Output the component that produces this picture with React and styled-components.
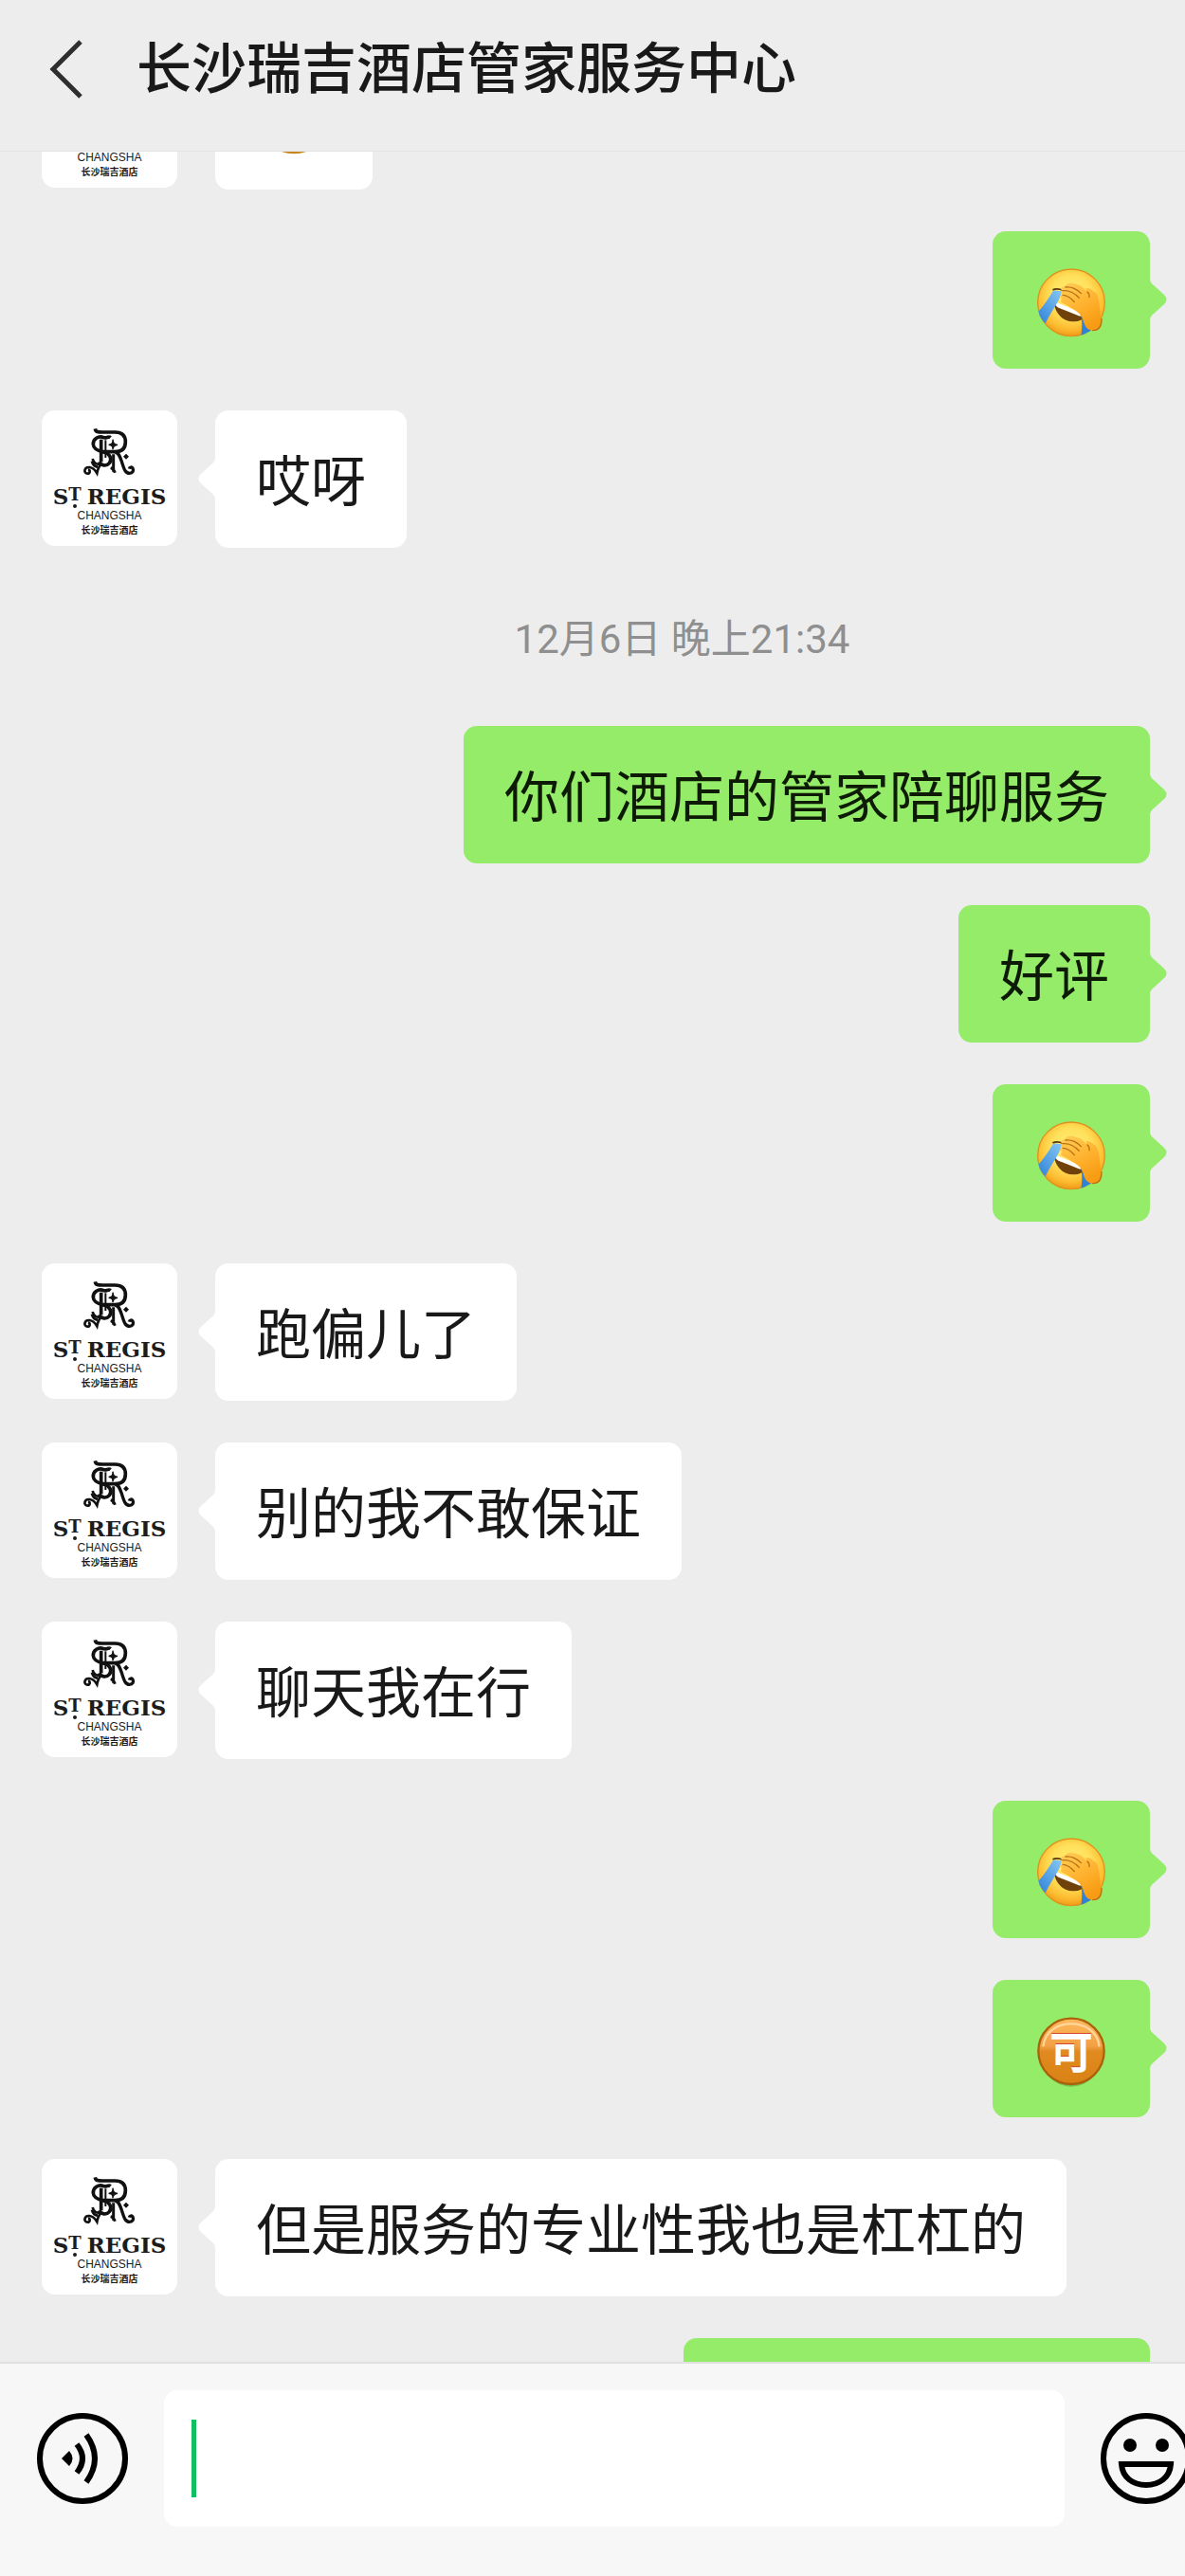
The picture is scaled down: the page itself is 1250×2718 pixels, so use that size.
import React, { useLayoutEffect, useRef } from "react";
import styled, { createGlobalStyle } from "styled-components";

const GlobalStyle = createGlobalStyle`
  * { box-sizing: border-box; }
  body {
    margin: 0;
    background: #ededed;
    color: #191919;
    font-family: Roboto, "Noto Sans CJK SC", sans-serif;
  }
`;

const Screen = styled.div`
  display: flex;
  flex-direction: column;
  height: 100vh;
  overflow: hidden;
`;

const Header = styled.header`
  display: flex;
  align-items: center;
  gap: 44px;
  flex: none;
  padding: 29px 44px 43px;
  border-bottom: 1px solid #e4e4e4;
`;

const Title = styled.h1`
  margin: 0;
  padding-top: 2px;
  font-size: 58px;
  line-height: 85px;
  font-weight: 500;
`;

const IconButton = styled.button`
  display: flex;
  flex: none;
  padding: 0;
  border: 0;
  background: none;
  color: ${(p) => p.$color || "#000"};
`;

const Messages = styled.main`
  display: flex;
  flex-direction: column;
  flex: 1;
  gap: 44px;
  min-height: 0;
  padding: 0 37px 0 44px;
  overflow-y: auto;
  scrollbar-width: none;
`;

const Row = styled.div`
  display: flex;
  flex: none;
  gap: 40px;
  justify-content: ${(p) => (p.$mine ? "flex-end" : "flex-start")};
`;

const Bubble = styled.div`
  position: relative;
  display: flex;
  align-items: center;
  min-width: ${(p) => p.$minWidth || 0}px;
  min-height: 145px;
  padding: 0 43px;
  border-radius: 14px;
  background: ${(p) => (p.$mine ? "#95ec69" : "#fff")};
  color: ${(p) => (p.$mine ? "#0d1a06" : "#191919")};
  font-size: 58px;
  line-height: 86px;
`;

const BubbleText = styled.p`
  margin: 0;
  padding-top: 6px;
`;

const Tail = styled.svg`
  position: absolute;
  top: 50px;
  ${(p) => (p.$mine ? "left: 100%;" : "right: 100%; transform: scaleX(-1);")}
  fill: ${(p) => (p.$mine ? "#95ec69" : "#fff")};
`;

const Stamp = styled.time`
  flex: none;
  padding: 24px 0 18px 182px;
  color: #8f8f8f;
  font-size: 42px;
  line-height: 58px;
  text-align: center;
`;

const AvatarCard = styled.div`
  display: flex;
  flex-direction: column;
  align-items: center;
  flex: none;
  width: 143px;
  height: 143px;
  padding-top: 14px;
  border-radius: 14px;
  background: #fff;
  color: #1c1c1c;
  white-space: nowrap;
`;

const Brand = styled.span`
  display: flex;
  gap: 6px;
  padding-top: 5px;
  font-family: "DejaVu Serif", serif;
  font-size: 23px;
  line-height: 24px;
  font-weight: 700;
`;

const Saint = styled.span`
  display: flex;
`;

const RaisedT = styled.span`
  position: relative;
  font-size: 18px;
  line-height: 20px;
  &::after {
    content: "";
    position: absolute;
    left: 5px;
    bottom: 0;
    width: 4px;
    height: 4px;
    border-radius: 50%;
    background: currentColor;
  }
`;

const City = styled.span`
  font-family: "Liberation Sans", sans-serif;
  font-size: 12px;
  line-height: 16px;
`;

const HotelName = styled.span`
  font-size: 10px;
  line-height: 16px;
  font-weight: 700;
`;

const Footer = styled.footer`
  flex: none;
  overflow: hidden;
  border-top: 2px solid #e0e0e0;
  background: #f7f7f7;
`;

const Composer = styled.form`
  display: flex;
  align-items: center;
  gap: 38px;
  margin-right: -7px;
  padding: 28px 0 52px 39px;
`;

const Field = styled.label`
  display: flex;
  align-items: center;
  flex: 1;
  min-width: 0;
  height: 144px;
  padding: 0 29px;
  border-radius: 14px;
  background: #fff;
`;

const Caret = styled.span`
  flex: none;
  width: 5px;
  height: 82px;
  background: #10c060;
`;

const TextInput = styled.input`
  flex: 1;
  min-width: 0;
  height: 86px;
  padding: 0;
  border: 0;
  outline: 0;
  background: none;
  font: inherit;
  font-size: 58px;
  caret-color: transparent;
`;

function Monogram() {
  return (
    <svg width="64" height="60" viewBox="0 0 192 180" fill="none" stroke="#111" strokeWidth="11" aria-hidden="true">
      <path d="M49 16C51 28 60 27 76 27H112C138 27 145 42 145 58C145 80 132 89 112 89H68" />
      <path d="M112 90C124 91 128 105 134 123C141 144 144 157 158 157C168 157 172 149 168 141C165 136 158 138 157 143" strokeWidth="10" />
      <path d="M98 44C91 38 84 48 76 44C60 37 42 48 43 66C44 82 61 87 76 90C96 94 104 112 94 125C84 137 67 132 62 121" />
      <path d="M68 50V121" />
      <path d="M82 52V108" strokeWidth="6" />
      <path d="M105 50C105 61 104 65 92 67C104 69 105 72 105 82C105 73 108 69 120 67C108 65 106 61 105 50Z" fill="#111" strokeWidth="4" />
      <path d="M107 97V152M98 140C105 142 109 147 112 155" strokeWidth="9" />
      <path d="M41 111C45 128 55 130 70 126C61 134 57 146 55 157C48 145 41 139 31 138C13 137 12 158 25 158C34 158 34 147 27 146" strokeWidth="8" />
      <path d="M39 119C43 133 48 135 57 137" strokeWidth="9" />
      <path d="M147 95L156 104L147 113L138 104Z" fill="#111" stroke="none" />
    </svg>
  );
}

function Avatar() {
  return (
    <AvatarCard>
      <Monogram />
      <Brand>
        <Saint>
          S<RaisedT>T</RaisedT>
        </Saint>
        <span>REGIS</span>
      </Brand>
      <City>CHANGSHA</City>
      <HotelName>长沙瑞吉酒店</HotelName>
    </AvatarCard>
  );
}

function FacepalmEmoji() {
  return (
    <svg width="80" height="80" viewBox="0 -9 240 240" role="img" aria-label="笑哭捂脸">
      <defs>
        <radialGradient id="skin" cx="0.5" cy="0.4" r="0.62">
          <stop offset="0" stopColor="#fff07e" />
          <stop offset="0.5" stopColor="#ffe05a" />
          <stop offset="0.8" stopColor="#fdbb30" />
          <stop offset="1" stopColor="#ee9416" />
        </radialGradient>
        <linearGradient id="hand" x1="0" y1="0" x2="0.5" y2="1">
          <stop offset="0" stopColor="#ffcf58" />
          <stop offset="0.5" stopColor="#ffb634" />
          <stop offset="1" stopColor="#f89c14" />
        </linearGradient>
        <linearGradient id="tear" x1="1" y1="0" x2="0" y2="1">
          <stop offset="0" stopColor="#86c8f4" />
          <stop offset="1" stopColor="#2b7fd6" />
        </linearGradient>
        <clipPath id="face">
          <circle cx="120" cy="118" r="108" />
        </clipPath>
      </defs>
      <circle cx="120" cy="118" r="106" fill="url(#skin)" stroke="#e0921c" strokeWidth="4" />
      <g clipPath="url(#face)">
        <path d="M66 122C70 151 92 177 126 178C143 179 155 173 161 165Z" fill="#70420a" />
        <path d="M66 117C70 127 74 132 84 136L148 161L157 151L70 116Z" fill="#fff" />
        <path d="M64 79L90 82C86 111 60 139 38 184L10 152C30 133 49 104 64 79Z" fill="url(#tear)" />
        <path d="M151 160C155 178 155 199 150 230L185 218L176 174Z" fill="#2f82d4" />
        <path d="M61 77C72 73 83 74 94 79" stroke="#59380a" strokeWidth="5" fill="none" />
      </g>
      <path d="M94 80C82 79 90 65 99 67C105 53 119 53 133 59C148 61 157 69 171 84L166 74C174 67 187 77 199 89C213 110 208 144 216 169C221 197 208 211 185 206C169 203 163 193 158 175C153 156 142 150 131 142C120 135 106 125 92 119C85 115 86 107 93 107C82 101 84 92 94 94C86 88 87 81 94 80Z" fill="url(#hand)" />
      <path d="M102 69C120 66 140 76 151 89M94 80C113 78 133 89 145 103M93 94C105 94 119 103 130 116M171 84C177 89 178 94 177 101M216 169C216 195 205 206 188 206" fill="none" stroke="#b87018" strokeWidth="4" strokeLinecap="round" />
    </svg>
  );
}

const SealText = styled.text`
  font-family: "Noto Sans CJK SC", sans-serif;
  font-size: 138px;
  font-weight: 700;
  text-anchor: middle;
`;

function SealEmoji() {
  return (
    <svg width="80" height="80" viewBox="0 -9 240 240" role="img" aria-label="可">
      <defs>
        <linearGradient id="seal" x1="0" y1="0" x2="0" y2="1">
          <stop offset="0" stopColor="#ffb95e" />
          <stop offset="0.42" stopColor="#f2a046" />
          <stop offset="0.5" stopColor="#e08a20" />
          <stop offset="1" stopColor="#d98214" />
        </linearGradient>
      </defs>
      <ellipse cx="120" cy="126" rx="98" ry="104" fill="#4d8c2d" opacity="0.45" />
      <circle cx="120" cy="118" r="104" fill="url(#seal)" stroke="#aa620c" strokeWidth="7" />
      <path d="M32 100C42 8 198 8 208 100" fill="none" stroke="#ffd79b" strokeWidth="7" strokeLinecap="round" />
      <SealText x="120" y="167" fill="#d34829">可</SealText>
      <SealText x="120" y="172" fill="#fff">可</SealText>
    </svg>
  );
}

function SmileEmoji() {
  return (
    <svg width="80" height="80" viewBox="0 -9 240 240" role="img" aria-label="微笑">
      <ellipse cx="120" cy="112" rx="108" ry="102" fill="#c8861e" />
      <ellipse cx="120" cy="106" rx="104" ry="94" fill="#ffd24a" />
      <path d="M75 130Q120 175 165 130" fill="none" stroke="#70420a" strokeWidth="8" />
      <circle cx="85" cy="90" r="10" fill="#70420a" />
      <circle cx="155" cy="90" r="10" fill="#70420a" />
    </svg>
  );
}

const emojis = { facepalm: FacepalmEmoji, seal: SealEmoji, smile: SmileEmoji };

function Message({ mine, text, emoji, minWidth }) {
  const Emoji = emojis[emoji];
  return (
    <Row $mine={mine}>
      {!mine && <Avatar />}
      <Bubble $mine={mine} $minWidth={minWidth}>
        {Emoji && <Emoji />}
        {text && <BubbleText>{text}</BubbleText>}
        <Tail $mine={mine} width="18" height="44" viewBox="0 0 18 44" aria-hidden="true">
          <path d="M0 0Q0 4 4 7L15 17Q20 22 15 27L4 37Q0 40 0 44Z" />
        </Tail>
      </Bubble>
    </Row>
  );
}

const thread = [
  { emoji: "smile" },
  { mine: true, emoji: "facepalm" },
  { text: "哎呀" },
  { stamp: "12月6日 晚上21:34" },
  { mine: true, text: "你们酒店的管家陪聊服务" },
  { mine: true, text: "好评" },
  { mine: true, emoji: "facepalm" },
  { text: "跑偏儿了" },
  { text: "别的我不敢保证" },
  { text: "聊天我在行" },
  { mine: true, emoji: "facepalm" },
  { mine: true, emoji: "seal" },
  { text: "但是服务的专业性我也是杠杠的" },
  { mine: true, minWidth: 492 },
];

export default function App() {
  const list = useRef(null);

  // Open part-way into the thread, with the first message half scrolled away.
  useLayoutEffect(() => {
    list.current.scrollTop = 105;
  }, []);

  return (
    <Screen>
      <GlobalStyle />
      <Header>
        <IconButton type="button" aria-label="返回" $color="#2e2e2e">
          <svg width="56" height="64" viewBox="0 0 56 64" fill="none" stroke="currentColor" strokeWidth="5" aria-hidden="true">
            <path d="M41 3L12 32L41 61" />
          </svg>
        </IconButton>
        <Title>长沙瑞吉酒店管家服务中心</Title>
      </Header>
      <Messages ref={list}>
        {thread.map((m, i) => (m.stamp ? <Stamp key={i}>{m.stamp}</Stamp> : <Message key={i} {...m} />))}
      </Messages>
      <Footer>
        <Composer onSubmit={(e) => e.preventDefault()}>
          <IconButton type="button" aria-label="语音输入">
            <svg width="96" height="96" viewBox="0 0 96 96" fill="none" stroke="currentColor" strokeWidth="6" aria-hidden="true">
              <circle cx="48" cy="48" r="45" />
              <path d="M26 48L34 40Q41 48 34 56Z" fill="currentColor" stroke="none" />
              <path d="M42 33Q54 48 42 63M52 23Q70 48 52 73" />
            </svg>
          </IconButton>
          <Field>
            <Caret />
            <TextInput type="text" aria-label="消息" />
          </Field>
          <IconButton type="button" aria-label="表情">
            <svg width="96" height="96" viewBox="0 0 96 96" fill="none" stroke="currentColor" strokeWidth="6" aria-hidden="true">
              <circle cx="48" cy="48" r="45" />
              <circle cx="31" cy="34" r="7" fill="currentColor" stroke="none" />
              <circle cx="65" cy="34" r="7" fill="currentColor" stroke="none" />
              <path d="M22 54H74C73 68 62 76 48 76C34 76 23 68 22 54Z" />
            </svg>
          </IconButton>
        </Composer>
      </Footer>
    </Screen>
  );
}
